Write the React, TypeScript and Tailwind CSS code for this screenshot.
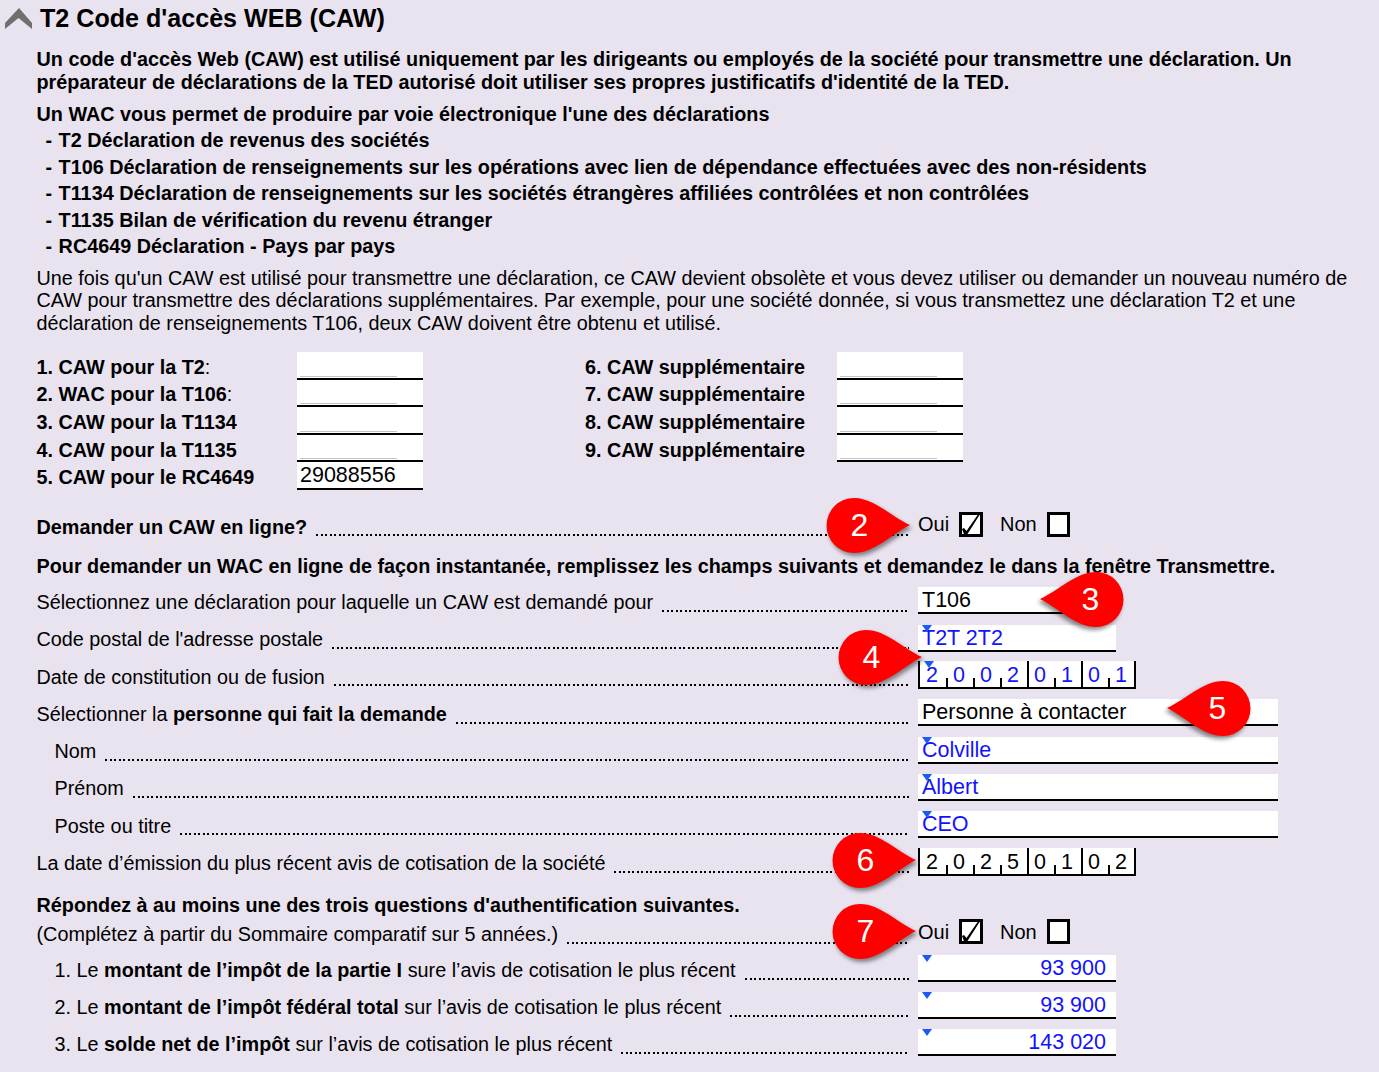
import { ReactNode } from "react";

const Callout = ({ n, left, top, flip }: { n: number; left: number; top: number; flip?: boolean }) => (
  <div className="absolute w-[84px] h-[55px]" style={{ left, top }}>
    <svg
      width="84"
      height="55"
      viewBox="0 0 84 55"
      className={`overflow-visible drop-shadow-[2px_3px_2px_rgba(0,0,0,0.45)] ${flip ? "-scale-x-100" : ""}`}
    >
      <path d="M84 27 C66 19 48 0 28 0 A27.5 27.5 0 0 0 28 55 C48 55 66 36 84 27 Z" fill="#ff0000" />
    </svg>
    <span
      className={`absolute top-0 h-[53px] w-[67px] flex items-center justify-center text-white text-[32px] ${flip ? "right-0" : "left-0"}`}
    >
      {n}
    </span>
  </div>
);

const Tri = () => (
  <span className="absolute left-[4px] top-0 w-0 h-0 border-l-[5.5px] border-r-[5.5px] border-t-[7px] border-l-transparent border-r-transparent border-t-[#1a5cf0]" />
);

const Field = ({ w, value, blue, right }: { w: number; value?: string; blue?: boolean; right?: boolean }) => (
  <div
    className={`relative h-[27px] bg-white border-b-2 border-black px-[4px] text-[21.5px] leading-[26.5px] ${blue ? "text-[#1212ff]" : "text-black"} ${right ? "text-right pr-[10px]" : ""}`}
    style={{ width: w }}
  >
    {blue && <Tri />}
    {value}
  </div>
);

const Comb = ({ digits, blue }: { digits: string; blue?: boolean }) => (
  <div className={`relative flex w-[218px] h-[28px] bg-white border-l-2 border-r-2 border-b-2 border-black text-[21.5px] leading-[28px] ${blue ? "text-[#1212ff]" : "text-black"}`}>
    {blue && <Tri />}
    {digits.split("").map((d, i) => (
      <div key={i} className="relative w-[27px] shrink-0 text-center pr-[3px]">
        {d}
        {i > 0 && (
          <span className={`absolute left-[-1px] bottom-0 w-[2px] bg-black ${i === 4 || i === 6 ? "h-full" : "h-[9px]"}`} />
        )}
      </div>
    ))}
  </div>
);

const Check = ({ on }: { on?: boolean }) => (
  <div className={`relative h-[25px] bg-white border-[3px] border-black ${on ? "w-[24px]" : "w-[23px]"}`}>
    {on && (
      <svg width="24" height="25" viewBox="0 0 24 25" className="absolute left-[-3px] top-[-3px] overflow-visible">
        <path d="M3 17 L5 16 L7.5 19 L20 1 L21.5 1.5 L7.5 23.5 L5.5 23.5 Z" fill="#000" />
      </svg>
    )}
  </div>
);

const OuiNon = () => (
  <div className="flex items-center mb-[3px] text-[20px] text-black">
    <span className="w-[41px]">Oui</span>
    <Check on />
    <span className="w-[47px] ml-[17px]">Non</span>
    <Check />
  </div>
);

const Row = ({ label, indent, right, h = "h-[37.3px]" }: { label: ReactNode; indent?: boolean; right: ReactNode; h?: string }) => (
  <div className={`flex items-center ${h}`}>
    <div className={`flex w-[872.5px] pt-[4px] overflow-hidden whitespace-nowrap ${indent ? "pl-[18px]" : ""}`}>
      <span className="shrink-0 mr-[9px]">{label}</span>
      {/* dot leader, two dots per 9px so they stay crisp */}
      <span className="flex-1 h-[2px] self-end mb-[6px] bg-[linear-gradient(90deg,#000_2px,transparent_2px,transparent_5px,#000_5px,#000_7px,transparent_7px)] bg-[length:9px_2px] bg-repeat-x" />
    </div>
    <div className="ml-[9px]">{right}</div>
  </div>
);

const CawField = ({ value }: { value?: string }) => (
  <div className="relative w-[126px] h-[27.6px] bg-white border-b-2 border-black px-[3px] text-[21.5px] leading-[26px]">
    {value}
    {!value && <span className="absolute left-[3px] bottom-[1px] w-[97px] h-[1px] bg-[#c4c4c4]" />}
  </div>
);

const left = ["1. CAW pour la T2", "2. WAC pour la T106", "3. CAW pour la T1134", "4. CAW pour la T1135", "5. CAW pour le RC4649"];
const suffix = [":", ":", "", "", ""];
const list = [
  "T2 Déclaration de revenus des sociétés",
  "T106 Déclaration de renseignements sur les opérations avec lien de dépendance effectuées avec des non-résidents",
  "T1134 Déclaration de renseignements sur les sociétés étrangères affiliées contrôlées et non contrôlées",
  "T1135 Bilan de vérification du revenu étranger",
  "RC4649 Déclaration - Pays par pays",
];

export default function App() {
  return (
    <div className="relative w-full h-[1072px] overflow-hidden bg-[#e8e3ef] text-black text-[19.81px] font-['Liberation_Sans',Arial,sans-serif]">
      <div className="flex items-center h-[37px] pl-[5px]">
        <svg width="28" height="22" viewBox="0 0 28 22" className="mr-[7px]">
          <path d="M0 15 L14 0 L27 15 V21 L13.5 10 L0 21 Z" fill="#6f6f6f" />
        </svg>
        <h1 className="text-[25.1px] font-bold">T2 Code d'accès WEB (CAW)</h1>
      </div>

      <div className="pl-[36.5px] pr-[20px]">
        <p className="mt-[11px] font-bold leading-[23px]">
          Un code d'accès Web (CAW) est utilisé uniquement par les dirigeants ou employés de la société pour transmettre une déclaration. Un préparateur de déclarations de la TED autorisé doit utiliser ses propres justificatifs d'identité de la TED.
        </p>

        <div className="mt-[7px] font-bold leading-[26.4px]">
          <div>Un WAC vous permet de produire par voie électronique l'une des déclarations</div>
          {list.map((t) => (
            <div key={t} className="pl-[9px]"><span className="mr-[1px]">-</span> {t}</div>
          ))}
        </div>

        <p className="mt-[7.5px] leading-[22.5px]">
          Une fois qu'un CAW est utilisé pour transmettre une déclaration, ce CAW devient obsolète et vous devez utiliser ou demander un nouveau numéro de CAW pour transmettre des déclarations supplémentaires. Par exemple, pour une société donnée, si vous transmettez une déclaration T2 et une déclaration de renseignements T106, deux CAW doivent être obtenu et utilisé.
        </p>

        <div className="mt-[17.5px] flex">
          <div className="w-[548.5px]">
            {left.map((t, i) => (
              <div key={t} className="flex items-center h-[27.6px]">
                <span className="w-[260.5px] pt-[4px]"><b>{t}</b>{suffix[i]}</span>
                <CawField value={i === 4 ? "29088556" : undefined} />
              </div>
            ))}
          </div>
          <div>
            {[6, 7, 8, 9].map((n) => (
              <div key={n} className="flex items-center h-[27.6px]">
                <span className="w-[252px] pt-[4px] font-bold">{n}. CAW supplémentaire</span>
                <CawField />
              </div>
            ))}
          </div>
        </div>

        <div className="mt-[17px]">
          <Row label={<b>Demander un CAW en ligne?</b>} right={<OuiNon />} />
        </div>
        <div className="h-[28px] leading-[29px] mt-[8px] font-bold whitespace-nowrap">
          Pour demander un WAC en ligne de façon instantanée, remplissez les champs suivants et demandez le dans la fenêtre Transmettre.
        </div>

        <div className="mt-[2px]">
          <Row label="Sélectionnez une déclaration pour laquelle un CAW est demandé pour" right={<Field w={198} value="T106" />} />
          <Row label="Code postal de l'adresse postale" right={<Field w={198} value="T2T 2T2" blue />} />
          <Row label="Date de constitution ou de fusion" right={<Comb digits="20020101" blue />} />
          <Row label={<>Sélectionner la <b>personne qui fait la demande</b></>} right={<Field w={360} value="Personne à contacter" />} />
          <Row indent label="Nom" right={<Field w={360} value="Colville" blue />} />
          <Row indent label="Prénom" right={<Field w={360} value="Albert" blue />} />
          <Row indent label="Poste ou titre" right={<Field w={360} value="CEO" blue />} />
          <Row label="La date d’émission du plus récent avis de cotisation de la société" right={<Comb digits="20250102" />} />
        </div>

        <div className="mt-[11px] h-[26px] leading-[26px] font-bold">
          Répondez à au moins une des trois questions d'authentification suivantes.
        </div>
        <Row h="h-[31px]" label="(Complétez à partir du Sommaire comparatif sur 5 années.)" right={<OuiNon />} />
        <div className="mt-[1.6px]">
          <Row h="h-[37px]" indent label={<>1. Le <b>montant de l’impôt de la partie I</b> sure l’avis de cotisation le plus récent</>} right={<Field w={198} value="93 900" blue right />} />
          <Row h="h-[37px]" indent label={<>2. Le <b>montant de l’impôt fédéral total</b> sur l’avis de cotisation le plus récent</>} right={<Field w={198} value="93 900" blue right />} />
          <Row h="h-[37px]" indent label={<>3. Le <b>solde net de l’impôt</b> sur l’avis de cotisation le plus récent</>} right={<Field w={198} value="143 020" blue right />} />
        </div>
      </div>

      <Callout n={2} left={826} top={498} />
      <Callout n={3} left={1040} top={572} flip />
      <Callout n={4} left={838} top={630} />
      <Callout n={5} left={1167} top={681} flip />
      <Callout n={6} left={832} top={833} />
      <Callout n={7} left={832} top={904} />
    </div>
  );
}
